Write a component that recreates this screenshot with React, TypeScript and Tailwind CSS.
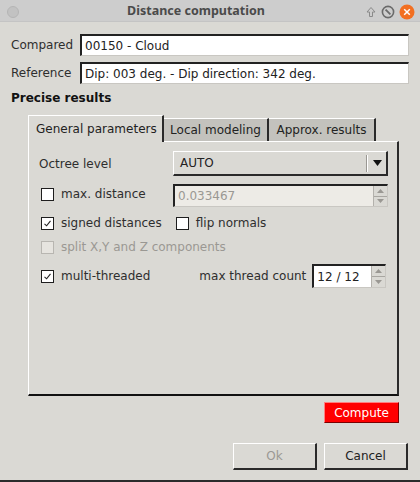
import React from "react";

const font = { fontFamily: '"DejaVu Sans", "Liberation Sans", sans-serif' };

function Check({ checked, disabled }: { checked?: boolean; disabled?: boolean }) {
  return (
    <div
      className={`w-[13px] h-[13px] border flex items-center justify-center shrink-0 ${
        disabled ? "border-[#b8b6b1] bg-[#e6e4df]" : "border-[#1e1e1e] bg-white"
      }`}
    >
      {checked && (
        <svg width="9" height="9" viewBox="0 0 9 9">
          <path d="M1.5 4.8 L3.6 6.8 L7.5 1.8" fill="none" stroke="#222" strokeWidth="1.1" />
        </svg>
      )}
    </div>
  );
}

function SpinArrows() {
  return (
    <div className="w-[14px] h-full flex flex-col border-l border-[#b3b1ac] bg-[#dad9d4]">
      <div className="flex-1 flex items-center justify-center border-b border-[#a8a6a1]">
        <svg width="7" height="4" viewBox="0 0 7 4"><path d="M0 4 L3.5 0 L7 4 Z" fill="#9a9893" /></svg>
      </div>
      <div className="flex-1 flex items-center justify-center">
        <svg width="7" height="4" viewBox="0 0 7 4"><path d="M0 0 L3.5 4 L7 0 Z" fill="#9a9893" /></svg>
      </div>
    </div>
  );
}

export default function App() {
  return (
    <div className="w-[420px] h-[482px] bg-[#dad9d4] flex flex-col text-[12px] text-[#2e2e2e] overflow-hidden" style={font}>
      {/* title bar */}
      <div className="h-[22px] bg-[#cdcdcd] flex items-center pl-[7px] pr-[5px] pt-[2px] shrink-0 border-b border-[#c4c4c4]">
        <div className="w-[12px] h-[12px] rounded-full bg-[#c2c2c2] border border-[#b5b5b5]" />
        <div
          className="flex-1 text-center font-bold text-[12.5px] text-[#4a4a4a] pl-[8px]"
          style={{ fontFamily: '"Noto Sans", "DejaVu Sans", sans-serif' }}
        >
          Distance computation
        </div>
        <div className="flex items-center gap-[4px]">
          <svg width="12" height="12" viewBox="0 0 12 12">
            <path d="M6 1.5 L10 6 L7.5 6 L7.5 10.5 L4.5 10.5 L4.5 6 L2 6 Z" fill="none" stroke="#8a8a8a" strokeWidth="1" />
          </svg>
          <svg width="14" height="14" viewBox="0 0 14 14">
            <circle cx="7" cy="7" r="5.6" fill="none" stroke="#6a6a6a" strokeWidth="1.6" />
            <path d="M4.6 4.6 L9.4 9.4" stroke="#6a6a6a" strokeWidth="1.8" />
          </svg>
          <svg width="16" height="16" viewBox="0 0 16 16">
            <circle cx="8" cy="8" r="7.5" fill="#f26f22" />
            <path d="M5.2 5.2 L10.8 10.8 M10.8 5.2 L5.2 10.8" stroke="#fff" strokeWidth="1.5" />
          </svg>
        </div>
      </div>

      <div className="flex flex-col px-[11px] pt-[12px]">
        <div className="flex items-center h-[22px]">
          <div className="w-[69px]">Compared</div>
          <div className="flex-1 h-[22px] bg-white border-t-2 border-l-2 border-t-[#222] border-l-[#222] border-b border-r border-[#c9c7c2] flex items-center pl-[3px] text-[#222]">
            00150 - Cloud
          </div>
        </div>
        <div className="flex items-center h-[22px] mt-[6px]">
          <div className="w-[69px]">Reference</div>
          <div className="flex-1 h-[22px] bg-white border-t-2 border-l-2 border-t-[#222] border-l-[#222] border-b border-r border-[#c9c7c2] flex items-center pl-[3px] text-[#222]">
            Dip: 003 deg. - Dip direction: 342 deg.
          </div>
        </div>
        <div className="mt-[7px] h-[14px] flex items-center font-bold text-[#111]">Precise results</div>
      </div>

      {/* tabs */}
      <div className="ml-[28px] w-[371px] mt-[9px] flex flex-col">
        <div className="flex items-end h-[27px] relative z-10">
          <div className="h-[27px] w-[136px] bg-[#dad9d4] border-l border-t border-white border-r-2 border-r-[#2a2a2a] flex items-center pl-[7px] pb-[1px] -mb-[1px] text-[#222]">
            General parameters
          </div>
          <div className="h-[23px] w-[105px] bg-[#c3c2bd] border-t border-white border-r-2 border-r-[#2a2a2a] flex items-center justify-center text-[#222]">
            Local modeling
          </div>
          <div className="h-[23px] w-[107px] bg-[#c3c2bd] border-t border-white border-r-2 border-r-[#2a2a2a] flex items-center justify-center text-[#222]">
            Approx. results
          </div>
        </div>
        <div className="h-[255px] border-l border-t border-white border-r-2 border-b-2 border-r-[#2a2a2a] border-b-[#111] flex flex-col pl-[10px] pr-[9px] pt-[9px]">
          <div className="flex items-center h-[25px]">
            <div className="w-[134px]">Octree level</div>
            <div className="flex-1 h-[25px] border-l border-t border-white border-r-2 border-b-2 border-r-[#2a2a2a] border-b-[#2a2a2a] flex items-center">
              <div className="flex-1 pl-[6px] text-[#222]">AUTO</div>
              <div className="w-[1px] h-[17px] bg-[#9a9893]" />
              <div className="w-[1px] h-[17px] bg-white" />
              <div className="w-[18px] flex items-center justify-center">
                <svg width="9" height="6" viewBox="0 0 9 6"><path d="M0 0 L9 0 L4.5 6 Z" fill="#111" /></svg>
              </div>
            </div>
          </div>
          <div className="flex items-start h-[23px] mt-[8px]">
            <div className="w-[134px] flex items-center pl-[2px] mt-[1px]">
              <Check />
              <span className="ml-[7px]">max. distance</span>
            </div>
            <div className="flex-1 h-[23px] bg-[#edebe6] border-t-2 border-l-2 border-t-[#222] border-l-[#222] border-b border-r border-[#c9c7c2] flex items-center">
              <div className="flex-1 pl-[3px] text-[#9a9893]">0.033467</div>
              <SpinArrows />
            </div>
          </div>
          <div className="flex items-center h-[14px] mt-[9px] pl-[2px]">
            <Check checked />
            <span className="ml-[7px]">signed distances</span>
            <div className="ml-[14px]"><Check /></div>
            <span className="ml-[7px]">flip normals</span>
          </div>
          <div className="flex items-center h-[14px] mt-[10px] pl-[2px] text-[#9a9893]">
            <Check disabled />
            <span className="ml-[7px]">split X,Y and Z components</span>
          </div>
          <div className="flex items-center h-[24px] mt-[10px] pl-[2px]">
            <Check checked />
            <span className="ml-[7px]">multi-threaded</span>
            <span className="ml-[49px]">max thread count</span>
            <div className="ml-[6px] w-[74px] h-[24px] bg-white border-t-2 border-l-2 border-t-[#222] border-l-[#222] border-b border-r border-[#c9c7c2] flex items-center">
              <div className="flex-1 pl-[3px] text-[#222]">12 / 12</div>
              <SpinArrows />
            </div>
          </div>
        </div>
      </div>

      <div className="flex justify-end pr-[21px] mt-[6px]">
        <div className="w-[75px] h-[21px] bg-[#ff0000] border-l border-t border-[#ff8080] border-r border-b border-r-[#7a0000] border-b-[#7a0000] flex items-center justify-center text-white">
          Compute
        </div>
      </div>

      <div className="flex justify-end pr-[12px] mt-[20px] gap-[7px]">
        <div className="w-[84px] h-[27px] border-l border-t border-white border-r-2 border-b-2 border-r-[#2a2a2a] border-b-[#2a2a2a] flex items-center justify-center text-[#9a9893]">
          Ok
        </div>
        <div className="w-[84px] h-[27px] border-l border-t border-white border-r-2 border-b-2 border-r-[#2a2a2a] border-b-[#2a2a2a] flex items-center justify-center text-[#222]">
          Cancel
        </div>
      </div>

      <div className="flex-1" />
      <div className="h-[2px] bg-[#2b2b2b] shrink-0" />
    </div>
  );
}
